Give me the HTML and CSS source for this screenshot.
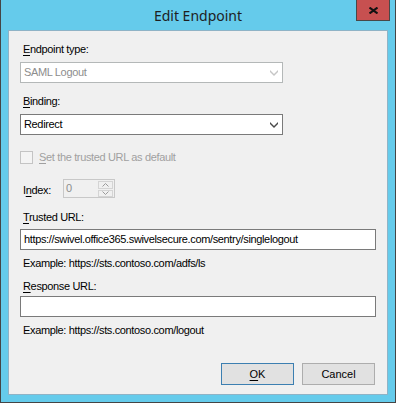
FILE: index.html
```html
<!DOCTYPE html>
<html lang="en">

<head>
    <meta charset="UTF-8">
    <title>Edit Endpoint</title>
    <link rel="stylesheet" href="styles.css">
</head>

<body>
    <div class="window">
        <div class="titlebar">
            <span class="title">Edit Endpoint</span>
            <button class="close-button" aria-label="Close">
                <svg width="9" height="7" viewBox="0 0 9 7">
                    <path d="M0.5 0.5 L8.5 6.5 M8.5 0.5 L0.5 6.5" stroke="#111" stroke-width="2" fill="none" />
                </svg>
            </button>
        </div>

        <div class="client">
            <div class="label first"><u>E</u>ndpoint type:</div>
            <div class="combo disabled">
                <span>SAML Logout</span>
                <svg class="chevron" width="8" height="6" viewBox="0 0 8 6">
                    <path d="M0 0 L4 4 L8 0 L8 2 L4 6 L0 2 Z" fill="#c6c6c6" />
                </svg>
            </div>

            <div class="label gap-12"><u>B</u>inding:</div>
            <div class="combo">
                <span>Redirect</span>
                <svg class="chevron" width="8" height="6" viewBox="0 0 8 6">
                    <path d="M0 0 L4 4 L8 0 L8 2 L4 6 L0 2 Z" fill="#4a4a4a" />
                </svg>
            </div>

            <label class="check-row">
                <span class="checkbox"></span>
                <span><u>S</u>et the trusted URL as default</span>
            </label>

            <div class="index-row">
                <span class="index-label">I<u>n</u>dex:</span>
                <div class="spinner">
                    <span class="spinner-value">0</span>
                    <div class="spinner-buttons">
                        <span class="spin-btn">
                            <svg width="7" height="4" viewBox="0 0 7 4"><path d="M0.5 3.5 L3.5 0.5 L6.5 3.5" stroke="#9a9a9a" fill="none" /></svg>
                        </span>
                        <span class="spin-btn">
                            <svg width="7" height="4" viewBox="0 0 7 4"><path d="M0.5 0.5 L3.5 3.5 L6.5 0.5" stroke="#9a9a9a" fill="none" /></svg>
                        </span>
                    </div>
                </div>
            </div>

            <div class="label gap-13"><u>T</u>rusted URL:</div>
            <div class="textbox">https://swivel.office365.swivelsecure.com/sentry/singlelogout</div>
            <div class="hint">Example: https://sts.contoso.com/adfs/ls</div>

            <div class="label gap-10"><u>R</u>esponse URL:</div>
            <div class="textbox response"></div>
            <div class="hint">Example: https://sts.contoso.com/logout</div>

            <div class="button-container">
                <button class="dlg-button default"><u>O</u>K</button>
                <button class="dlg-button">Cancel</button>
            </div>
        </div>
    </div>
</body>

</html>
```

FILE: styles.css
```css
body {
    margin: 0;
    padding: 0;
    font-family: "Liberation Sans", Arial, sans-serif;
    font-size: 11px;
    letter-spacing: -0.35px;
    color: #000;
    background: #65cbeb;
}

u {
    text-decoration: underline;
    text-underline-offset: 2px;
}

.window {
    box-sizing: border-box;
    width: 396px;
    height: 403px;
    background: #65cbeb;
    border: 1px solid #454545;
    border-top: none;
    display: flex;
    flex-direction: column;
}

.titlebar {
    position: relative;
    height: 30px;
    display: flex;
    justify-content: center;
    align-items: center;
}

.title {
    font-family: "Noto Sans", "Open Sans", sans-serif;
    font-size: 14px;
    letter-spacing: 0;
    color: #1e1e1e;
}

.close-button {
    position: absolute;
    top: 0;
    right: 5px;
    width: 34px;
    height: 21px;
    box-sizing: border-box;
    background: #c75050;
    border: 1px solid #484848;
    border-top: none;
    padding: 0;
    display: flex;
    justify-content: center;
    align-items: center;
}

.client {
    box-sizing: border-box;
    margin: 0 7px 0 7px;
    height: 365px;
    background: #f0f0f0;
    border: 1px solid #8fb3c6;
    display: flex;
    flex-direction: column;
    padding: 12px 11px 0 11px;
}

.label {
    line-height: 13px;
    padding-left: 3px;
}

.gap-10 {
    margin-top: 10px;
}

.gap-12 {
    margin-top: 12px;
}

.gap-13 {
    margin-top: 13px;
}

.combo {
    box-sizing: border-box;
    margin-top: 6px;
    width: 263px;
    height: 21px;
    background: #fff;
    border: 1px solid #7a7a7a;
    display: flex;
    align-items: center;
    justify-content: space-between;
    padding: 0 4px 0 3px;
    line-height: 13px;
}

.combo.disabled {
    border-color: #b4b8b8;
    color: #8d8d8d;
}

.chevron {
    display: block;
}

.check-row {
    margin-top: 16px;
    display: flex;
    align-items: center;
    gap: 6px;
    color: #a0a0a0;
    line-height: 13px;
}

.checkbox {
    box-sizing: border-box;
    width: 13px;
    height: 13px;
    border: 1px solid #c4c4c4;
    background: #f4f4f4;
}

.index-row {
    margin-top: 15px;
    display: flex;
    align-items: center;
}

.index-label {
    width: 40px;
    padding-left: 3px;
    padding-top: 2px;
}

.spinner {
    box-sizing: border-box;
    width: 52px;
    height: 19px;
    border: 1px solid #c8c8c8;
    background: #f0f0f0;
    display: flex;
    justify-content: space-between;
}

.spinner-value {
    color: #8d8d8d;
    padding: 2px 0 0 2px;
    line-height: 13px;
}

.spinner-buttons {
    display: flex;
    flex-direction: column;
    gap: 1px;
    padding: 1px 1px 0 0;
}

.spin-btn {
    box-sizing: border-box;
    width: 15px;
    height: 7.5px;
    border: 1px solid #d4d4d4;
    display: flex;
    justify-content: center;
    align-items: center;
}

.textbox {
    box-sizing: border-box;
    margin-top: 5px;
    width: 356px;
    height: 21px;
    background: #fff;
    border: 1px solid #7a7a7a;
    padding: 3px 0 0 3px;
    line-height: 13px;
}

.textbox.response {
    margin-top: 3px;
}

.hint {
    margin-top: 7px;
    padding-left: 3px;
    line-height: 13px;
}

.button-container {
    margin-top: 26px;
    display: flex;
    justify-content: flex-end;
    gap: 8px;
    padding-right: 1px;
}

.dlg-button {
    box-sizing: border-box;
    width: 73px;
    height: 22px;
    font-family: "Liberation Sans", Arial, sans-serif;
    font-size: 11px;
    color: #000;
    background: #e1e1e1;
    border: 1px solid #adadad;
    padding: 0;
}

.dlg-button.default {
    border-color: #3c7fb1;
}
```
